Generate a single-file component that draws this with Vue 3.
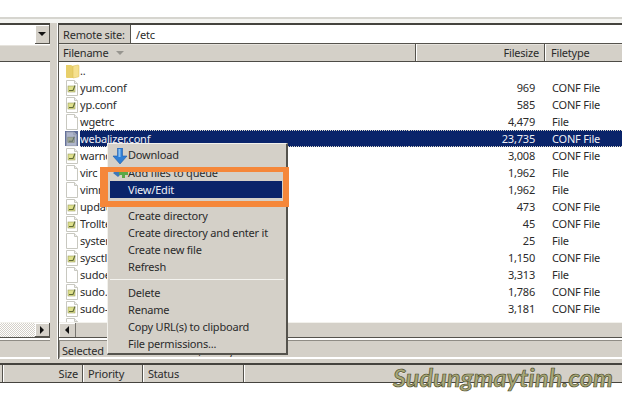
<script setup>
const rows = [
  { name: '..', size: '', type: '', icon: 'folder' },
  { name: 'yum.conf', size: '969', type: 'CONF File', icon: 'conf' },
  { name: 'yp.conf', size: '585', type: 'CONF File', icon: 'conf' },
  { name: 'wgetrc', size: '4,479', type: 'File', icon: 'file' },
  { name: 'webalizer.conf', size: '23,735', type: 'CONF File', icon: 'conf', selected: true },
  { name: 'warnquota.conf', size: '3,008', type: 'CONF File', icon: 'conf' },
  { name: 'virc', size: '1,962', type: 'File', icon: 'file' },
  { name: 'vimrc', size: '1,962', type: 'File', icon: 'file' },
  { name: 'updatedb.conf', size: '473', type: 'CONF File', icon: 'conf' },
  { name: 'Trolltech.conf', size: '45', type: 'CONF File', icon: 'conf' },
  { name: 'system-release', size: '25', type: 'File', icon: 'file' },
  { name: 'sysctl.conf', size: '1,150', type: 'CONF File', icon: 'conf' },
  { name: 'sudoers', size: '3,313', type: 'File', icon: 'file' },
  { name: 'sudo.conf', size: '1,786', type: 'CONF File', icon: 'conf' },
  { name: 'sudo-ldap.conf', size: '3,181', type: 'CONF File', icon: 'conf' },
  { name: 'statetab', size: '212', type: 'File', icon: 'file' }
]
</script>

<template>
  <div class="app">
    <div class="top-space"></div>
    <div class="top-rule"></div>
    <div class="panes">
      <section class="local">
        <div class="combo">
          <div class="combo-input"></div>
          <div class="btn"><span class="tri-down"></span></div>
        </div>
        <div class="head"></div>
        <div class="list"></div>
        <div class="hscroll dither">
          <div class="btn scroll-end"><span class="tri-right"></span></div>
        </div>
        <div class="status"></div>
      </section>
      <div class="split"></div>
      <section class="remote">
        <div class="site">
          <div class="site-label">Remote site:</div>
          <div class="site-input">/etc</div>
        </div>
        <div class="head cols">
          <div class="col-name">Filename <span class="tri-sort"></span></div>
          <div class="col-size">Filesize</div>
          <div class="col-type">Filetype</div>
        </div>
        <div class="list">
          <div v-for="r in rows" :key="r.name" class="row" :class="{ selected: r.selected }">
            <div class="icon" :class="{ dim: r.selected }">
              <svg v-if="r.icon === 'folder'" width="15" height="16" viewBox="0 0 15 16">
                <path d="M1 2h5l2 1v12H2q-1 0-1-1z" fill="#e8cf6a" />
                <path d="M8 3l5-1q1 0 1 1v10q0 1-1 1l-5 1z" fill="#f5e08e" stroke="#d8b84c" stroke-width=".5" />
              </svg>
              <svg v-else width="14" height="16" viewBox="0 0 14 16">
                <path d="M1.500.5h8l3 3v12h-11z" fill="#fff" stroke="#c8c8c0" />
                <path d="M9.500.5v3h3" fill="#eee" stroke="#c8c8c0" />
                <template v-if="r.icon === 'conf'">
                  <rect x="3" y="6" width="7" height="6" fill="#dfe18c" stroke="#9a9c62" stroke-width=".6" />
                  <path d="M4 10.500h4l2-5" fill="none" stroke="#5f6a38" stroke-width="1.100" />
                </template>
              </svg>
            </div>
            <div class="name"><span>{{ r.name }}</span></div>
            <div class="size">{{ r.size }}</div>
            <div class="type">{{ r.type }}</div>
          </div>
        </div>
        <div class="hscroll">
          <div class="btn scroll-start"><span class="tri-left"></span></div>
        </div>
        <div class="status">Selected 1 file. Total size: 23,735 bytes</div>
      </section>
    </div>
    <div class="queue-gap"></div>
    <div class="queue">
      <div class="q q1"></div>
      <div class="q q2">Size</div>
      <div class="q q3">Priority</div>
      <div class="q q4">Status</div>
      <div class="q q5"></div>
    </div>

    <div class="menu">
      <div class="mi first">
        <svg class="mi-icon" width="16" height="16" viewBox="0 0 16 16">
          <path d="M5.500 0h5v8H15l-7 8-7-8h4.500z" fill="#2f7fd6" stroke="#1c5aa8" stroke-width=".6" />
          <path d="M6.500 1h2v8H6.500z" fill="#8cc2f2" />
        </svg>
        Download
      </div>
      <div class="mi">
        <svg class="mi-icon" width="16" height="14" viewBox="0 0 16 14">
          <path d="M1 7l5-4 4 4-4 4z" fill="#3f78b8" />
          <path d="M10 3h3v3h3v3h-3v3h-3V9H7V6h3z" fill="#5aa84a" />
        </svg>
        Add files to queue
      </div>
      <div class="mi active">View/Edit</div>
      <div class="msep"></div>
      <div class="mi">Create directory</div>
      <div class="mi">Create directory and enter it</div>
      <div class="mi">Create new file</div>
      <div class="mi">Refresh</div>
      <div class="msep last"></div>
      <div class="mi">Delete</div>
      <div class="mi">Rename</div>
      <div class="mi">Copy URL(s) to clipboard</div>
      <div class="mi">File permissions...</div>
    </div>
    <div class="callout"></div>
    <div class="mark">Sudungmaytinh.com</div>
  </div>
</template>

<style scoped>
.app {
  position: relative;
  width: 622px;
  height: 404px;
  overflow: hidden;
  background: #fff;
  color: #2b2b2b;
  font: 11px/17px "Noto Sans", "DejaVu Sans", sans-serif;
  letter-spacing: -.2px;
}
.top-space { height: 17px; }
.top-rule { height: 2px; background: #d6d5cf; }
.panes {
  display: grid;
  grid-template-columns: 51px 6px 1fr;
  height: 340px;
  padding-top: 4px;
  box-sizing: border-box;
  background: linear-gradient(#f4f4f1 0 4px, #fff 4px);
}
.local, .remote {
  display: flex;
  flex-direction: column;
  min-width: 0;
}
.local { border-right: 1px solid #d4d0c8; }
.remote {
  border-top: 2px solid #45433e;
  border-left: 1px solid #55534d;
  margin-left: 1px;
}
.split { background: #d4d0c8; border-right: 1px solid #fff; margin-right: -1px; }
.combo {
  height: 21px;
  display: flex;
  border-top: 2px solid #45433e;
  box-sizing: border-box;
}
.combo-input { flex: 1; background: #fff; }
.btn {
  width: 15px;
  background: #d4d0c8;
  border-right: 1px solid #55534d;
  border-bottom: 1px solid #55534d;
  box-shadow: inset 1px 1px 0 #fff;
  display: flex;
  align-items: center;
  justify-content: center;
  box-sizing: border-box;
}
.tri-down, .tri-right, .tri-left, .tri-sort { display: block; width: 0; height: 0; border-style: solid; border-color: transparent; }
.tri-down { border-width: 4px 4px 0; border-top-color: #111; }
.tri-right { border-width: 4px 0 4px 4px; border-left-color: #111; }
.tri-left { border-width: 4px 4px 4px 0; border-right-color: #111; }
.tri-sort { display: inline-block; border-width: 4px 4px 0; border-top-color: #97958f; margin: 0 0 2px 5px; }
.head {
  height: 17px;
  flex: none;
  margin-top: 1px;
  background: #d4d0c8;
  border-bottom: 1px solid #4d4b46;
  box-sizing: border-box;
  box-shadow: inset 0 1px 0 #e6e3dd;
}
.list {
  height: 260px;
  flex: none;
  overflow: hidden;
  background: #fff;
}
.hscroll {
  height: 16px;
  flex: none;
  display: flex;
  background: #d4d0c8;
  border-top: 1px solid #f2f1ec;
  border-bottom: 1px solid #55534d;
  box-sizing: border-box;
}
.dither {
  background: repeating-conic-gradient(#d4d0c8 0 25%, #fff 0 50%) 0 0 / 2px 2px;
}
.scroll-end { margin-left: auto; }
.scroll-start { width: 17px; border-right: 1px solid #77756f; border-bottom: 0; }
.status {
  height: 19px;
  flex: none;
  margin-top: 2px;
  padding-left: 2px;
  background: #d4d0c8;
  border-top: 1px solid #8f8c85;
  border-left: 1px solid #8f8c85;
  border-bottom: 2px solid #fff;
  box-sizing: border-box;
  white-space: nowrap;
  overflow: hidden;
  line-height: 20px;
}
.local .status { border-left: 0; }
.site { display: flex; height: 19px; flex: none; line-height: 19px; }
.site-label {
  width: 72px;
  padding-left: 4px;
  box-sizing: border-box;
  background: #d4d0c8;
  border-right: 1px solid #55534d;
  border-bottom: 1px solid #55534d;
}
.site-input { flex: 1; padding-left: 5px; border-bottom: 1px solid #55534d; }
.cols { display: flex; margin-top: 0; height: 18px; line-height: 18px; }
.col-name { width: 357px; padding-left: 4px; box-sizing: border-box; border-right: 1px solid #55534d; box-shadow: 1px 0 0 #fff; }
.col-size { width: 129px; padding-right: 5px; text-align: right; box-sizing: border-box; border-right: 1px solid #55534d; box-shadow: 1px 0 0 #fff; }
.col-type { padding-left: 6px; }
.row {
  display: flex;
  height: 17px;
  box-sizing: border-box;
  white-space: nowrap;
  line-height: 18px;
}
.icon {
  width: 15px;
  margin-left: 6px;
  flex: none;
  display: flex;
  align-items: center;
}
.icon svg { display: block; }
.dim { width: 13px; margin-right: 2px; background: linear-gradient(transparent 1px, #5f6d99 1px 16px, transparent 16px); }
.dim svg { opacity: .5; }
.name { width: 329px; box-sizing: border-box; }
.size { width: 132px; text-align: right; padding-right: 6px; box-sizing: border-box; flex: none; }
.type { padding-left: 11px; flex: 1; }
.selected { color: #eef0f6; }
.selected .name, .selected .size, .selected .type {
  background-color: #0a246a;
  background-image: repeating-linear-gradient(90deg, #d9d6c8 0 1px, #0a246a 1px 2px), repeating-linear-gradient(90deg, #d9d6c8 0 1px, #0a246a 1px 2px);
  background-size: 100% 1px;
  background-position: 0 0, 0 100%;
  background-repeat: no-repeat;
}
.queue-gap { height: 4px; background: #d4d0c8; }
.queue {
  display: flex;
  height: 20px;
  background: #d4d0c8;
  border-top: 2px solid #45433e;
  border-bottom: 1px solid #45433e;
  box-sizing: border-box;
  line-height: 17px;
}
.q { border-right: 1px solid #55534d; box-shadow: 1px 0 0 #fff; box-sizing: border-box; }
.q1 { width: 3px; }
.q2 { width: 80px; text-align: right; padding-right: 4px; }
.q3 { width: 60px; padding-left: 5px; }
.q4 { width: 101px; padding-left: 5px; }
.q5 { flex: 1; border-right: 0; box-shadow: none; }
.menu {
  position: absolute;
  left: 107px;
  top: 143px;
  width: 181px;
  height: 212px;
  padding: 2px 4px 0 2px;
  box-sizing: border-box;
  background: #d4d0c8;
  border-top: 1px solid #f2f1ec;
  border-left: 1px solid #f2f1ec;
  border-right: 2px solid #55534d;
  border-bottom: 2px solid #55534d;
}
.mi {
  position: relative;
  height: 17px;
  padding-left: 18px;
  white-space: nowrap;
  line-height: 18px;
}
.first { margin-bottom: 1px; }
.mi-icon { position: absolute; left: 2px; top: 2px; }
.active { background: #0a246a; color: #eef0f6; }
.msep { height: 9px; }
.msep.last { position: relative; }
.msep.last::after {
  content: "";
  position: absolute;
  left: 0;
  right: -2px;
  top: 4px;
  height: 1px;
  background: #f4f3ef;
}
.callout {
  position: absolute;
  left: 100px;
  top: 167px;
  width: 189px;
  height: 40px;
  box-sizing: border-box;
  border: solid #f5873a;
  border-width: 5px 6px 6px 8px;
}
.mark {
  position: absolute;
  left: 393px;
  top: 360px;
  color: #a8a878;
  font: italic 700 25px/34px Lato, sans-serif;
  letter-spacing: .2px;
  white-space: nowrap;
  -webkit-text-stroke: .7px #4d4c2b;
  text-shadow: 0 1px 0 #fff;
}
</style>
